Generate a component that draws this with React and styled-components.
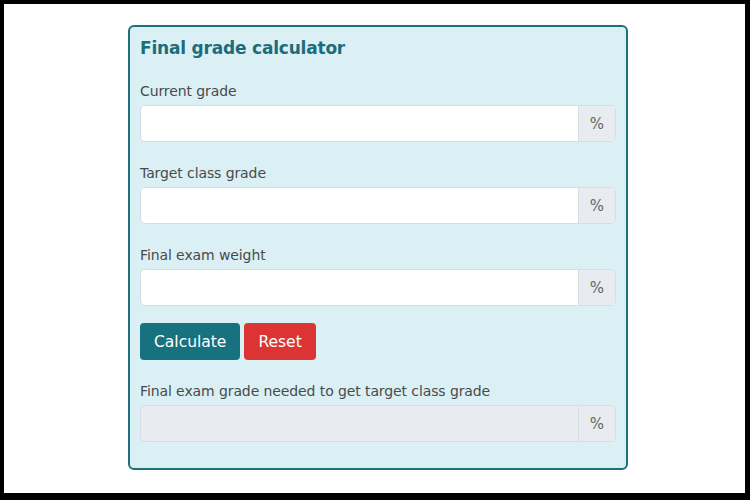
import styled, { createGlobalStyle } from "styled-components";

const Global = createGlobalStyle`
  html, body { margin: 0; padding: 0; }
  body { font-family: "DejaVu Sans", "Open Sans", sans-serif; background: #fff; }
  * { box-sizing: border-box; }
`;

const Frame = styled.div`
  width: 750px;
  height: 500px;
  border-style: solid;
  border-color: #000;
  border-width: 4px 5px 7px 4px;
  background: #fff;
  padding: 21px 0 0 124px;
`;

const Card = styled.div`
  width: 500px;
  height: 445px;
  background: #daf0f5;
  border: 2px solid #206f7c;
  border-radius: 6px;
  padding: 10px 10px;
`;

const Title = styled.h2`
  margin: 0 0 24px;
  font-size: 17px;
  font-weight: 700;
  color: #1d6c7a;
  line-height: 22px;
  letter-spacing: -0.2px;
`;

const Field = styled.div`
  margin-bottom: ${(p) => (p.last ? 0 : 23)}px;
`;

const Label = styled.div`
  font-size: 14px;
  color: #4a4a4a;
  line-height: 16px;
  margin-bottom: 6px;
  letter-spacing: -0.1px;
`;

const Group = styled.div`
  display: flex;
  height: 37px;
  border: 1px solid #d8dde2;
  border-radius: 5px;
  overflow: hidden;
  background: ${(p) => (p.disabled ? "#e8ebef" : "#fff")};
`;

const Input = styled.input`
  flex: 1;
  border: none;
  outline: none;
  background: transparent;
  font: inherit;
  padding: 0 12px;
`;

const Addon = styled.span`
  width: 37px;
  display: flex;
  align-items: center;
  justify-content: center;
  background: #e8ebef;
  border-left: 1px solid #d8dde2;
  color: #666;
  font-size: 15px;
`;

const Buttons = styled.div`
  display: flex;
  gap: 4px;
  margin: 17px 0 23px;
`;

const Button = styled.button`
  height: 37px;
  border: none;
  border-radius: 4px;
  padding: 0 14px;
  font-family: inherit;
  font-size: 15.5px;
  color: #fff;
  background: ${(p) => (p.danger ? "#dc3434" : "#17717f")};
  cursor: pointer;
`;

const fields = ["Current grade", "Target class grade", "Final exam weight"];

export default function App() {
  return (
    <>
      <Global />
      <Frame>
        <Card>
          <Title>Final grade calculator</Title>
          {fields.map((f, i) => (
            <Field key={f} last={i === fields.length - 1}>
              <Label>{f}</Label>
              <Group>
                <Input />
                <Addon>%</Addon>
              </Group>
            </Field>
          ))}
          <Buttons>
            <Button>Calculate</Button>
            <Button danger>Reset</Button>
          </Buttons>
          <Label>Final exam grade needed to get target class grade</Label>
          <Group disabled>
            <Input disabled />
            <Addon>%</Addon>
          </Group>
        </Card>
      </Frame>
    </>
  );
}
